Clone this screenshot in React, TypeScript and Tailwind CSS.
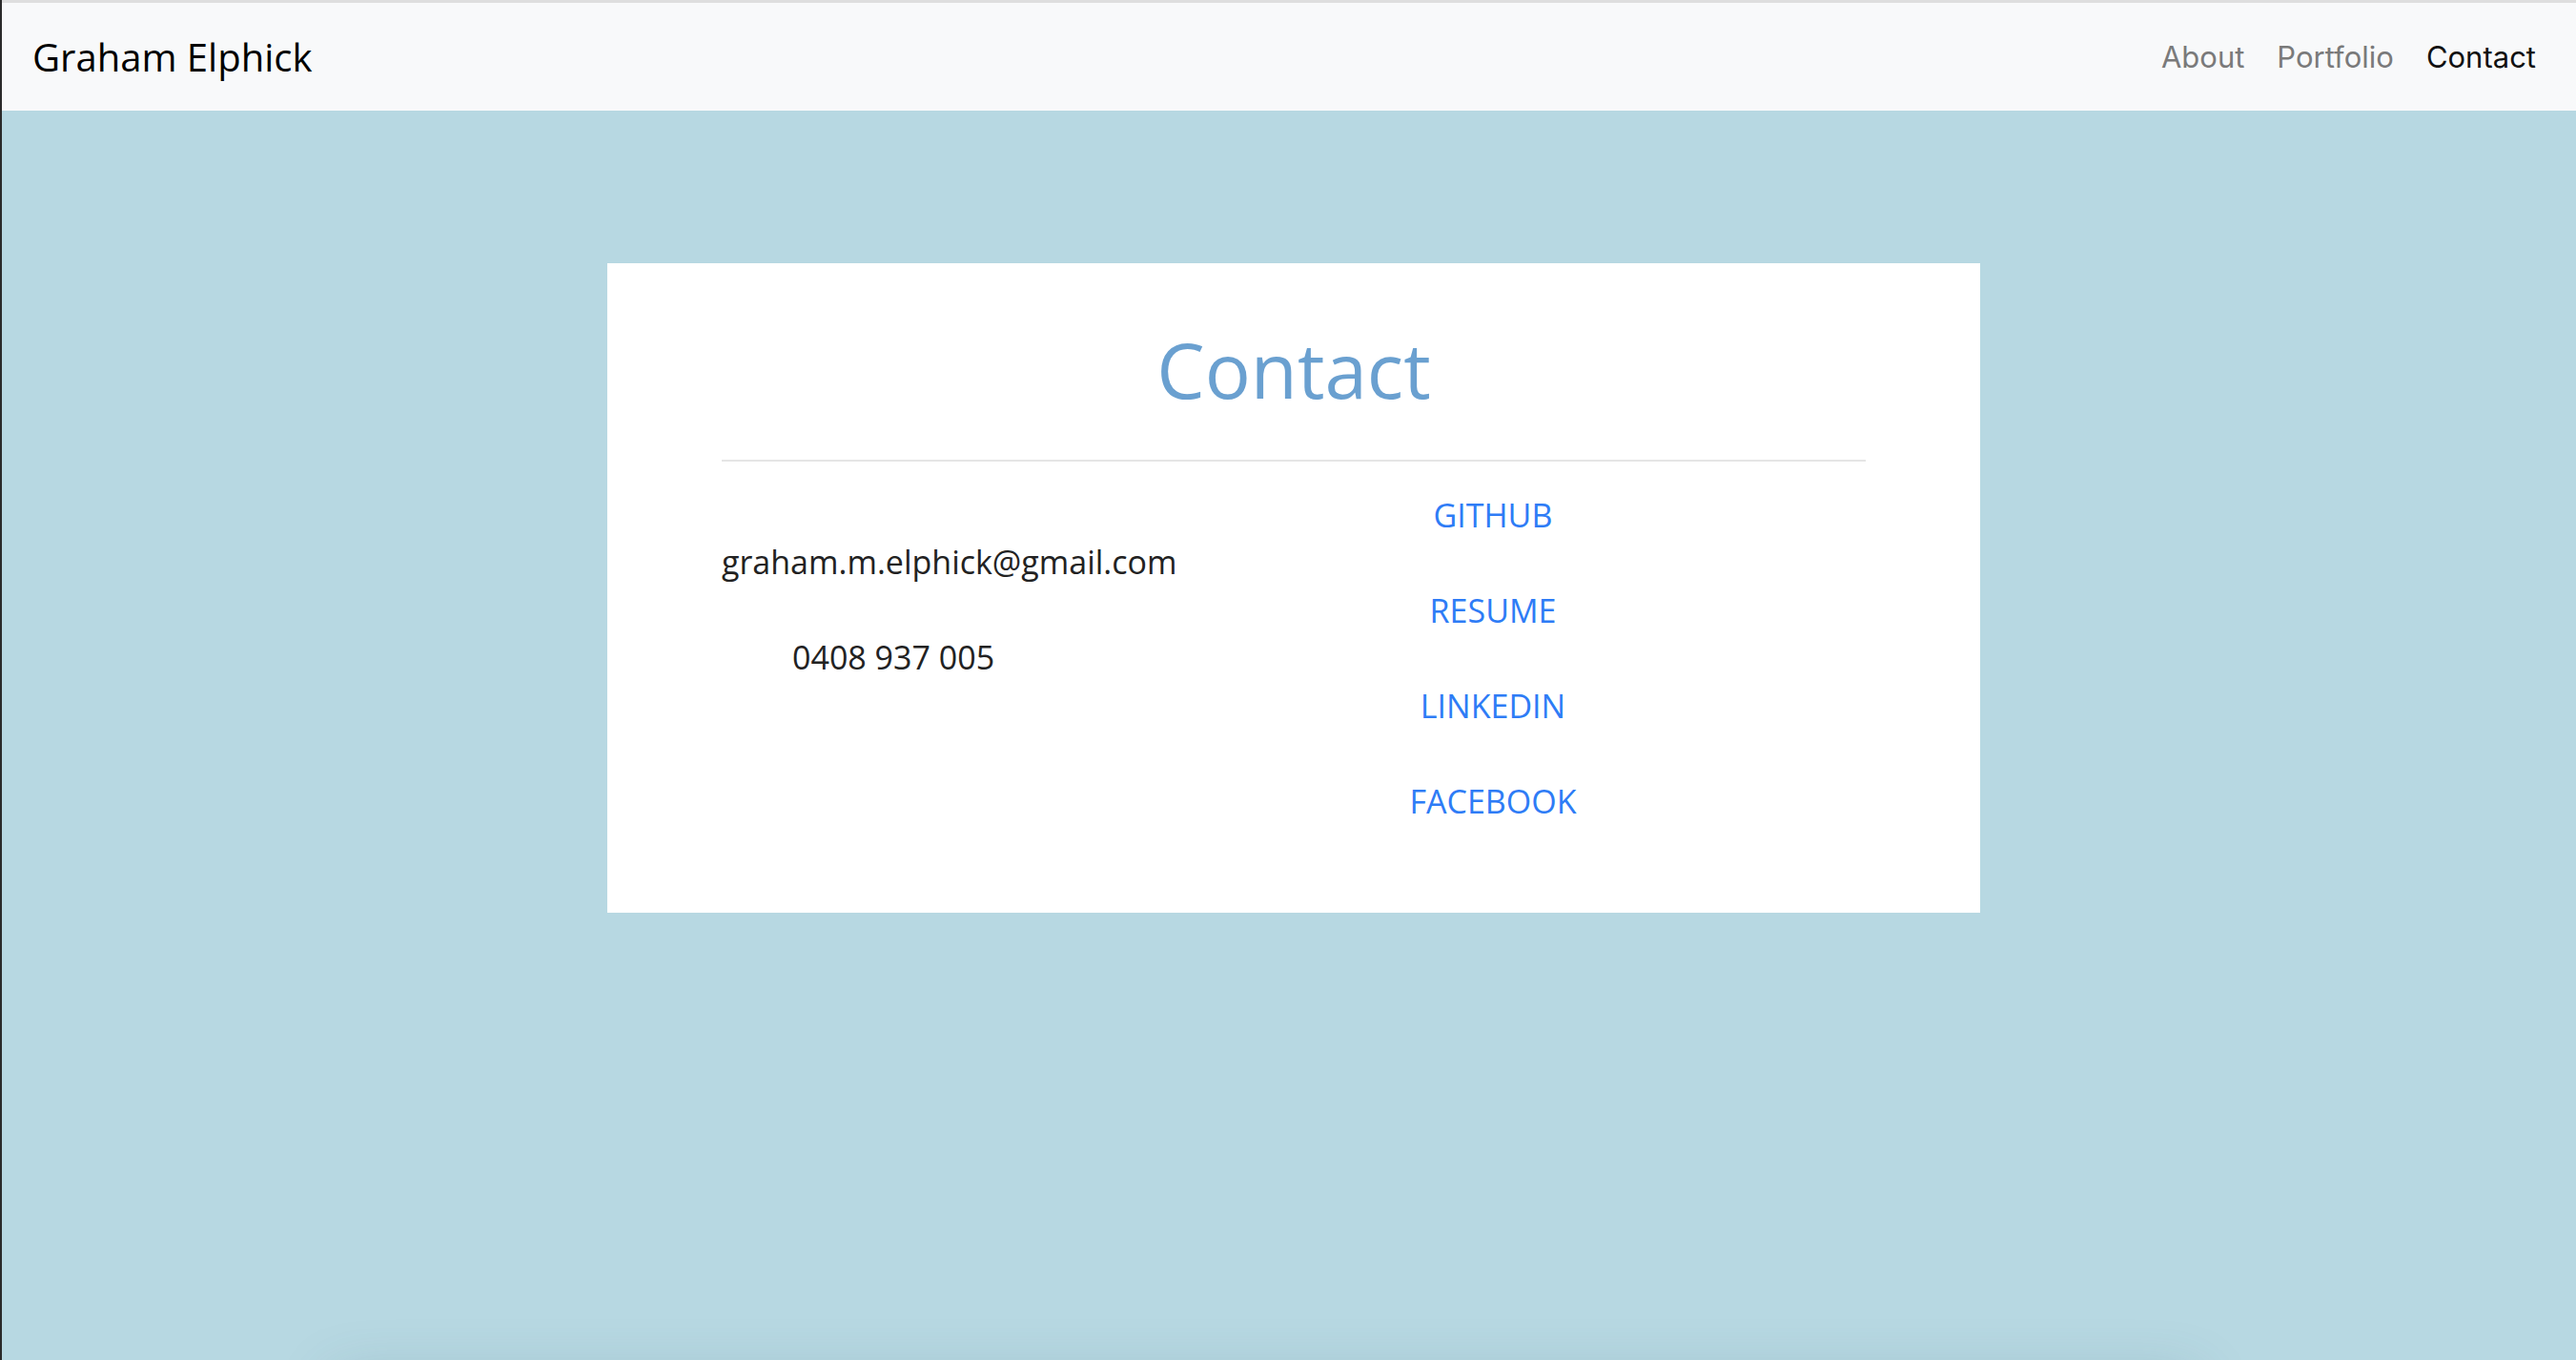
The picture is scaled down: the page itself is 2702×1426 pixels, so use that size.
import React from "react";

const links = ["GITHUB", "RESUME", "LINKEDIN", "FACEBOOK"];

export default function App() {
  return (
    <div className="h-[1426px] overflow-hidden bg-[#b7d8e2] border-l-[2px] border-[#2a2a2a] flex flex-col">
      <nav className="h-[116px] shrink-0 border-t-[3px] border-[#dedede] bg-[#f8f9fa] flex items-center justify-between pl-[32px] pr-[42px]">
        <span className="text-[40px] text-black font-['Open_Sans',sans-serif]">Graham Elphick</span>
        <div className="flex items-center gap-[34px] pt-[2px] text-[31px] font-['Inter',sans-serif]">
          <a className="text-[#7a7a7a]">About</a>
          <a className="text-[#7a7a7a]">Portfolio</a>
          <a className="text-[#111]">Contact</a>
        </div>
      </nav>

      <main className="flex-1 pt-[160px] pl-[10px] font-['Open_Sans',sans-serif]">
        <div className="mx-auto w-[1440px] bg-white px-[120px] pt-[63px] pb-[67px]">
          <h1 className="text-center text-[80px] leading-[1.2] text-[#6aa0d0]">Contact</h1>
          <hr className="mt-[47px] border-t-[2px] border-[#e5e5e5]" />
          <div className="mt-[6px] flex text-[34px]">
            <div className="w-[600px] pt-[49px] text-[#222]">
              <div className="h-[100px] flex items-center">graham.m.elphick@gmail.com</div>
              <div className="h-[100px] flex items-center pl-[74px]">0408 937 005</div>
            </div>
            <div className="w-[418px] flex flex-col items-center text-[#2e7cf6]">
              {links.map((l) => (
                <a key={l} className="h-[100px] flex items-center">{l}</a>
              ))}
            </div>
          </div>
        </div>
      </main>

      <div className="relative h-0 shrink-0">
        <div className="absolute left-[360px] right-[410px] top-[30px] h-[60px] shadow-[0_0_60px_10px_rgba(60,100,120,0.25)]" />
      </div>
    </div>
  );
}
